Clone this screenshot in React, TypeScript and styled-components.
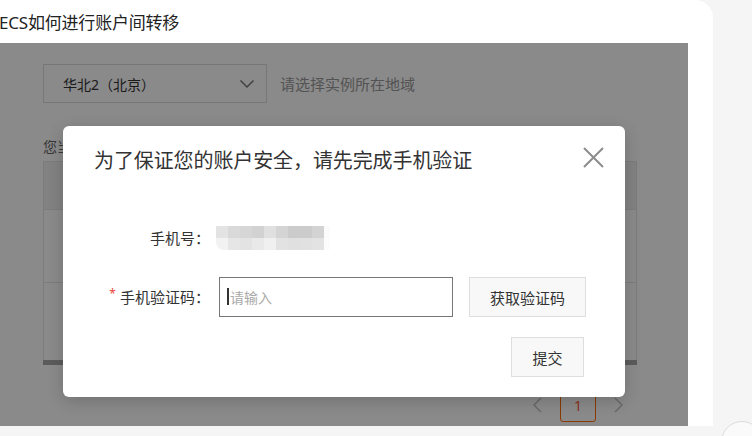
import React from "react";
import styled, { createGlobalStyle } from "styled-components";

const Global = createGlobalStyle`
  html, body { margin: 0; padding: 0; }
  body {
    width: 752px;
    height: 436px;
    overflow: hidden;
    background: #f5f5f5;
    font-family: "Noto Sans", "Noto Sans CJK SC", sans-serif;
    color: #333;
  }
  * { box-sizing: border-box; }
`;

const Page = styled.div`
  position: relative;
  width: 752px;
  height: 436px;
  overflow: hidden;
`;

const Card = styled.div`
  width: 713px;
  height: 426px;
  background: #fff;
  border-top-right-radius: 18px;
  display: flex;
  flex-direction: column;
`;

const TitleBar = styled.div`
  height: 43px;
  display: flex;
  align-items: center;
  font-size: 17px;
  color: #222;
  padding-left: 0;
  margin-left: -1px;
  letter-spacing: -0.2px;
`;

const Frame = styled.div`
  position: relative;
  width: 688px;
  height: 383px;
  overflow: hidden;
  background: #fff;
`;

const Content = styled.div`
  padding: 21px 51px 0 43px;
  display: flex;
  flex-direction: column;
`;

const RegionRow = styled.div`
  display: flex;
  align-items: center;
  gap: 13px;
`;

const Select = styled.div`
  width: 224px;
  height: 39px;
  border: 1px solid #dcdcdc;
  display: flex;
  align-items: center;
  justify-content: space-between;
  padding: 0 11px 0 19px;
  font-size: 14px;
  color: #333;
`;

const Hint = styled.span`
  font-size: 15px;
  color: #999;
`;

const SubTitle = styled.div`
  margin-top: 34px;
  font-size: 14px;
  line-height: 20px;
  color: #666;
`;

const Table = styled.div`
  margin-top: 4px;
  border-left: 1px solid #e6e6e6;
  border-right: 1px solid #e6e6e6;
  display: flex;
  flex-direction: column;
`;

const TRow = styled.div<{ $h: number; $head?: boolean }>`
  height: ${(p) => p.$h}px;
  background: ${(p) => (p.$head ? "#f1f1f1" : "#fff")};
  border-top: 1px solid #e6e6e6;
`;

const ScrollBar = styled.div`
  height: 5px;
  background: #a8a8a8;
`;

const Pager = styled.div`
  margin-top: 23px;
  margin-right: 13px;
  display: flex;
  justify-content: flex-end;
  align-items: center;
  gap: 18px;
`;

const PageBox = styled.div`
  width: 36px;
  height: 34px;
  border: 1px solid #ff6a00;
  border-radius: 3px;
  display: flex;
  align-items: center;
  justify-content: center;
  font-size: 14px;
  color: #ff5a3a;
`;

const Mask = styled.div`
  position: absolute;
  inset: 0;
  background: rgba(0, 0, 0, 0.46);
`;

const Modal = styled.div`
  position: absolute;
  left: 63px;
  top: 83px;
  width: 562px;
  height: 271px;
  background: #fff;
  border-radius: 6px;
  box-shadow: 0 4px 16px rgba(0, 0, 0, 0.18);
  padding: 21px 39px 20px 31px;
  display: flex;
  flex-direction: column;
`;

const ModalTitle = styled.div`
  font-size: 20px;
  line-height: 28px;
  color: #333;
  letter-spacing: -0.1px;
`;

const Close = styled.button`
  position: absolute;
  top: 21px;
  right: 21px;
  width: 21px;
  height: 21px;
  padding: 0;
  border: 0;
  background: none;
  display: flex;
`;

const Form = styled.div`
  margin-top: 43px;
  display: grid;
  grid-template-columns: 116px 1fr;
  column-gap: 9px;
  row-gap: 19px;
  align-items: center;
`;

const Label = styled.div`
  font-size: 15px;
  color: #333;
  text-align: right;
  height: 40px;
  line-height: 40px;
  white-space: nowrap;
`;

const Star = styled.span`
  color: #e5483c;
  font-size: 12px;
  vertical-align: top;
  line-height: 34px;
  margin-right: 4px;
`;

const Blur = styled.div`
  display: grid;
  grid-template-columns: repeat(9, 12px) 6px;
  grid-template-rows: 12px 12px;
  width: max-content;
  margin-left: -3px;
  border-bottom-left-radius: 8px;
  overflow: hidden;
`;

const Cell = styled.div<{ $c: string }>`
  background: ${(p) => p.$c};
`;

const Controls = styled.div`
  display: flex;
  align-items: center;
  gap: 16px;
`;

const InputWrap = styled.div`
  position: relative;
  width: 234px;
  height: 40px;
`;

const Input = styled.input`
  width: 100%;
  height: 100%;
  border: 1px solid #777;
  border-radius: 0;
  outline: none;
  padding: 0 0 0 10px;
  font-family: inherit;
  font-size: 14px;
  color: #333;
  &::placeholder { color: #aaa; }
`;

const Caret = styled.span`
  position: absolute;
  left: 8px;
  top: 11px;
  width: 2px;
  height: 17px;
  background: #333;
`;

const Btn = styled.button<{ $w: number }>`
  width: ${(p) => p.$w}px;
  height: 40px;
  background: #f8f8f8;
  border: 1px solid #dedede;
  border-radius: 0;
  font-family: inherit;
  font-size: 15px;
  color: #333;
  padding: 0;
`;

const Footer = styled.div`
  margin-top: 20px;
  display: flex;
  justify-content: flex-end;
  padding-right: 2px;
`;

const Fab = styled.div`
  position: absolute;
  left: 721px;
  top: 421px;
  width: 42px;
  height: 42px;
  border-radius: 50%;
  border: 1px solid #dcdcdc;
  background: #fafafa;
`;

const row1 = ["#e3e3e3", "#d9d9d9", "#d6d6d6", "#d2d2d2", "#e0e0e0", "#d4d4d4", "#cbcbcb", "#cbcbcb", "#d3d3d3", "#fbfbfb"];
const row2 = ["#f2f2f2", "#e6e6e6", "#e3e3e3", "#e9e9e9", "#f0f0f0", "#e2e2e2", "#e0e0e0", "#e1e1e1", "#e3e3e3", "#fcfcfc"];

const Chevron = ({ dir, color }: { dir: "down" | "left" | "right"; color: string }) => {
  if (dir === "down")
    return (
      <svg width="16" height="10" viewBox="0 0 16 10">
        <path d="M1.5 1.5 L8 8 L14.5 1.5" fill="none" stroke={color} strokeWidth="1.5" />
      </svg>
    );
  const d = dir === "left" ? "M9 1 L2 8 L9 15" : "M1 1 L8 8 L1 15";
  return (
    <svg width="10" height="16" viewBox="0 0 10 16">
      <path d={d} fill="none" stroke={color} strokeWidth="1.5" />
    </svg>
  );
};

export default function App() {
  return (
    <Page>
      <Global />
      <Card>
        <TitleBar>ECS如何进行账户间转移</TitleBar>
        <Frame>
          <Content>
            <RegionRow>
              <Select>
                <span>华北2（北京）</span>
                <Chevron dir="down" color="#777" />
              </Select>
              <Hint>请选择实例所在地域</Hint>
            </RegionRow>
            <SubTitle>您当前账号下的实例列表</SubTitle>
            <Table>
              <TRow $h={48} $head />
              <TRow $h={73} />
              <TRow $h={78} />
            </Table>
            <ScrollBar />
            <Pager>
              <Chevron dir="left" color="#c4c4c4" />
              <PageBox>1</PageBox>
              <Chevron dir="right" color="#c4c4c4" />
            </Pager>
          </Content>
          <Mask />
          <Modal>
            <ModalTitle>为了保证您的账户安全，请先完成手机验证</ModalTitle>
            <Close aria-label="关闭">
              <svg width="21" height="21" viewBox="0 0 21 21">
                <path d="M1 1 L20 20 M20 1 L1 20" stroke="#8c8c8c" strokeWidth="2" fill="none" />
              </svg>
            </Close>
            <Form>
              <Label>手机号：</Label>
              <Blur>
                {row1.map((c, i) => (
                  <Cell key={"a" + i} $c={c} />
                ))}
                {row2.map((c, i) => (
                  <Cell key={"b" + i} $c={c} />
                ))}
              </Blur>
              <Label>
                <Star>*</Star>手机验证码：
              </Label>
              <Controls>
                <InputWrap>
                  <Input placeholder="请输入" />
                  <Caret />
                </InputWrap>
                <Btn $w={117}>获取验证码</Btn>
              </Controls>
            </Form>
            <Footer>
              <Btn $w={73}>提交</Btn>
            </Footer>
          </Modal>
        </Frame>
      </Card>
      <Fab />
    </Page>
  );
}
